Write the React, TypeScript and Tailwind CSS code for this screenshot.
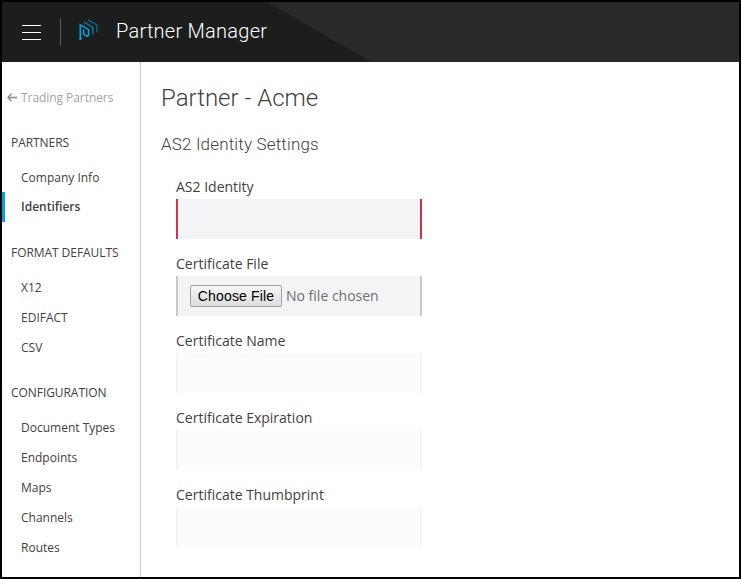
import React from "react";

const groups = [
  { title: "PARTNERS", items: ["Company Info", "Identifiers"] },
  { title: "FORMAT DEFAULTS", items: ["X12", "EDIFACT", "CSV"] },
  { title: "CONFIGURATION", items: ["Document Types", "Endpoints", "Maps", "Channels", "Routes"] },
];

function Logo() {
  return (
    <svg className="mb-1 ml-[18px] h-[22px] w-[19px]" viewBox="0 0 19 22" fill="none">
      <path d="M1.3 21V5.8L9.6 10.6V16.2L7.9 17.3L4.6 15V10.6" stroke="#00a3e0" strokeWidth="1.6" />
      <path d="M0.6 20.4L2.8 19.2" stroke="#00a3e0" strokeWidth="1.4" />
      <path d="M5 3.2L13.8 8.4V15.4" stroke="#0b7ba6" strokeWidth="1.4" />
      <path d="M9 0.9L17.9 6.2V13.2" stroke="#0f6487" strokeWidth="1.4" />
    </svg>
  );
}

function Header() {
  return (
    <header className="relative flex h-[60px] shrink-0 items-center bg-[#1c1e1d] font-['Roboto',sans-serif]">
      <svg className="absolute inset-0 h-[60px] w-[737px]" viewBox="0 0 737 60">
        <path d="M265 0H737V60H369Z" fill="#28292b" />
      </svg>
      <div className="relative flex items-center">
        <div className="ml-5 flex h-[15px] w-[19px] flex-col justify-between">
          <i className="h-px bg-white" />
          <i className="h-px bg-white" />
          <i className="h-px bg-white" />
        </div>
        <div className="ml-[19px] h-7 w-px bg-[#58595a]" />
        <Logo />
        <span className="mb-0.5 ml-[18px] whitespace-nowrap text-[20px] font-light leading-6 tracking-[0.25px] text-white">
          Partner Manager
        </span>
      </div>
    </header>
  );
}

function Sidebar() {
  return (
    <nav className="w-[139px] shrink-0 whitespace-nowrap border-r border-[#c8c8c8] pt-5 text-[12px] leading-[32px]">
      <div className="flex h-[30px] items-center pl-[5px] text-[#a3a3a3]">
        <svg className="mr-1 h-[9px] w-[10px]" viewBox="0 0 10 9" fill="none" stroke="#8b8b8b" strokeWidth="1.4">
          <path d="M10 4.5H1M4.6 0.7L0.9 4.5L4.6 8.3" />
        </svg>
        <span className="h-[30px] tracking-[-0.06px]">Trading Partners</span>
      </div>
      {groups.map((g) => (
        <section key={g.title} className="mt-[15px]">
          <h3 className="mb-[5px] h-[30px] pl-[9px] tracking-[-0.06px]">{g.title}</h3>
          {g.items.map((item) =>
            item === "Identifiers" ? (
              <div
                key={item}
                className="h-[30px] border-l-[3px] border-[#00a3e0] pl-4 font-semibold leading-[30px]"
              >
                {item}
              </div>
            ) : (
              <div key={item} className="h-[30px] pl-[19px]">
                {item}
              </div>
            ),
          )}
        </section>
      ))}
    </nav>
  );
}

function Field({ label, box, children }: { label: string; box: string; children?: React.ReactNode }) {
  return (
    <div className="mb-[13px]">
      <div className="h-6 text-[14px] leading-6">{label}</div>
      <div className={`flex h-10 w-[246px] items-center border-x-2 pl-3 ${box}`}>{children}</div>
    </div>
  );
}

export default function App() {
  const readonlyBox = "border-[#f3f4f4] bg-[#fbfcfc]";
  return (
    <div className="flex h-[579px] w-[741px] flex-col overflow-hidden border-2 border-black bg-white font-['Open_Sans',sans-serif] text-[#3f4144]">
      <Header />
      <div className="flex flex-1">
        <Sidebar />
        <main className="pl-5">
          <h1 className="mt-5 whitespace-nowrap font-['Roboto',sans-serif] text-[24px] font-light leading-8">
            Partner - Acme
          </h1>
          <h2 className="mt-[18px] whitespace-nowrap font-['Roboto',sans-serif] text-[17px] font-light leading-6 tracking-[0.16px]">
            AS2 Identity Settings
          </h2>
          <form className="ml-[15px] mt-[19px]">
            <Field label="AS2 Identity" box="border-[#d6304c] bg-[#f3f4f6]" />
            <Field label="Certificate File" box="border-[#c7c9cb] bg-[#f3f4f6]">
              <button
                type="button"
                className="h-[22px] w-[92px] whitespace-nowrap rounded-[2px] border border-[#a0a0a0] bg-linear-to-b from-[#f6f6f6] to-[#dddddd] text-center font-['Liberation_Sans',sans-serif] text-[14px] leading-5 tracking-[0.15px] text-black"
              >
                Choose File
              </button>
              <span className="mb-0.5 ml-1 text-[14px] text-[#6f6f6f]">No file chosen</span>
            </Field>
            <Field label="Certificate Name" box={readonlyBox} />
            <Field label="Certificate Expiration" box={readonlyBox} />
            <Field label="Certificate Thumbprint" box={readonlyBox} />
          </form>
        </main>
      </div>
    </div>
  );
}
